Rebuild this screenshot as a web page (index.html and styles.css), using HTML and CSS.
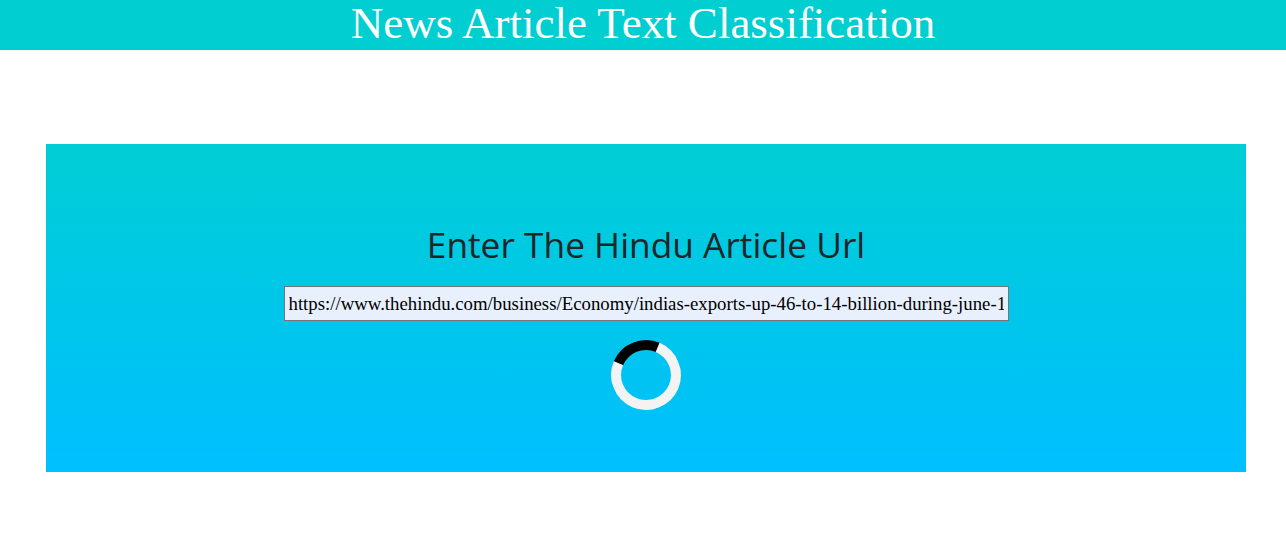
FILE: index.html
```html
<!DOCTYPE html>
<html>
<head>
<meta charset="utf-8">
<link rel="stylesheet" href="styles.css">
</head>
<body>
<header class="topbar">
  <h1 class="title">News Article Text Classification</h1>
</header>
<main class="main">
  <section class="card">
    <h2 class="card-title">Enter The Hindu Article Url</h2>
    <input class="url-input" type="text" value="https://www.thehindu.com/business/Economy/indias-exports-up-46-to-14-billion-during-june-1">
    <div class="spinner"></div>
  </section>
</main>
</body>
</html>
```
FILE: styles.css
```css
html, body {
  margin: 0;
  padding: 0;
  background: #ffffff;
}
.topbar {
  height: 50px;
  background: #00ced1;
  display: flex;
  justify-content: center;
  align-items: flex-start;
}
.title {
  margin: 0;
  font-family: "Liberation Serif", "Times New Roman", serif;
  font-weight: normal;
  font-size: 45px;
  line-height: 46px;
  color: #ffffff;
}
.main {
  padding: 94px 40px 0 46px;
}
.card {
  width: 1200px;
  height: 328px;
  box-sizing: border-box;
  background: linear-gradient(to bottom, #00ced4, #00bfff);
  display: flex;
  flex-direction: column;
  align-items: center;
  padding-top: 76px;
}
.card-title {
  margin: 0;
  font-family: "Open Sans", "Noto Sans", sans-serif;
  font-weight: 400;
  font-size: 35.3px;
  line-height: 48px;
  color: #212529;
}
.url-input {
  margin-top: 18px;
  width: 725px;
  height: 35px;
  box-sizing: border-box;
  border: 1px solid #767676;
  background: #e8f0fe;
  padding: 0 4px;
  font-family: "Liberation Serif", "Times New Roman", serif;
  font-size: 18.8px;
  color: #000;
  outline: none;
}
.spinner {
  margin-top: 19px;
  width: 50px;
  height: 50px;
  border: 10px solid #f3f3f3;
  border-top-color: #000000;
  border-radius: 50%;
  transform: rotate(-22deg);
}
```
